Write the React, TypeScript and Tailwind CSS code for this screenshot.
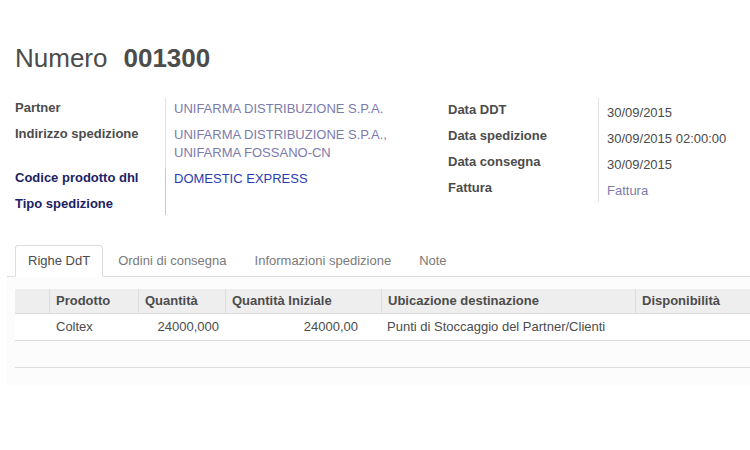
import React from 'react';

interface Field {
  label: string;
  values: string[];
  labelClass?: string;
  valueClass?: string;
  borderClass?: string;
}

const leftFields: Field[] = [
  { label: 'Partner', values: ['UNIFARMA DISTRIBUZIONE S.P.A.'], valueClass: 'text-[#7c7bad]', borderClass: 'border-[#e2e2e2]' },
  {
    label: 'Indirizzo spedizione',
    values: ['UNIFARMA DISTRIBUZIONE S.P.A.,', 'UNIFARMA FOSSANO-CN'],
    valueClass: 'text-[#7c7bad]',
    borderClass: 'border-[#e2e2e2]',
  },
  {
    label: 'Codice prodotto dhl',
    values: ['DOMESTIC EXPRESS'],
    labelClass: 'text-[#1b2263]',
    valueClass: 'text-[#2c3cb4]',
    borderClass: 'border-[#c9c9c9]',
  },
  { label: 'Tipo spedizione', values: [''], labelClass: 'text-[#1b2263]', borderClass: 'border-[#c9c9c9]' },
];

const rightFields: Field[] = [
  { label: 'Data DDT', values: ['30/09/2015'] },
  { label: 'Data spedizione', values: ['30/09/2015 02:00:00'] },
  { label: 'Data consegna', values: ['30/09/2015'] },
  { label: 'Fattura', values: ['Fattura'], valueClass: 'text-[#7c7bad]' },
];

const tabs = ['Righe DdT', 'Ordini di consegna', 'Informazioni spedizione', 'Note'];

export default function App() {
  return (
    <div className="min-h-[450px] bg-white font-['Liberation_Sans',Arial,sans-serif] text-[13px] leading-[20px] text-[#4c4c4c]">
      <div className="pl-[15px] pt-[43px]">
        <h1 className="flex h-[30px] items-baseline text-[26px] leading-[30px]">
          <span>Numero</span>
          <span className="ml-[16px] font-bold">001300</span>
        </h1>
      </div>

      <div className="mt-[25px] flex pl-[15px]">
        <div className="w-[433px]">
          {leftFields.map((f, i) => {
            const last = i === leftFields.length - 1;
            return (
              <div key={f.label} className="flex">
                <div className={`w-[150px] font-bold ${f.labelClass ?? ''} ${last ? 'pb-[1px]' : 'pb-[6px]'}`}>
                  {f.label}
                </div>
                <div
                  className={`flex-1 border-l pl-[8px] pt-[2px] leading-[18px] ${f.borderClass ?? ''} ${f.valueClass ?? ''} ${
                    last ? '' : 'pb-[6px]'
                  }`}
                >
                  {f.values.map((v, j) => (
                    <div key={j} className="h-[18px]">{v}</div>
                  ))}
                </div>
              </div>
            );
          })}
        </div>

        <div className="flex-1">
          {rightFields.map((f) => (
            <div key={f.label} className="flex">
              <div className="w-[150px] pb-[4px] pt-[2px] font-bold">{f.label}</div>
              <div className={`flex-1 border-l border-[#e2e2e2] pb-[1px] pl-[8px] pt-[5px] ${f.valueClass ?? 'text-[#4a4a4a]'}`}>
                {f.values[0]}
              </div>
            </div>
          ))}
        </div>
      </div>

      <div className="mt-[30px]">
        <div className="ml-[7px] flex border-b border-[#dddddd] pl-[8px]">
          {tabs.map((t, i) => (
            <div
              key={t}
              className={`-mb-px mr-[2px] rounded-t-[3px] border px-[12px] py-[5px] ${
                i === 0 ? 'border-[#dddddd] border-b-white bg-white text-[#4c4c4c]' : 'border-transparent text-[#7a7a7a]'
              }`}
            >
              {t}
            </div>
          ))}
        </div>

        <div className="ml-[7px] bg-[#fcfcfc] pb-[17px] pl-[8px] pt-[12px]">
          <div className="w-[735px]">
            <div className="flex h-[25px] items-center border-b border-[#dddddd] bg-[#eeeeee] font-bold">
              <div className="h-full w-[34px]" />
              <div className="flex h-full w-[89px] items-center border-l border-[#dddddd] pl-[6px]">Prodotto</div>
              <div className="flex h-full w-[87px] items-center border-l border-[#dddddd] pl-[6px]">Quantità</div>
              <div className="flex h-full w-[156px] items-center border-l border-[#dddddd] pl-[6px]">Quantità Iniziale</div>
              <div className="flex h-full w-[254px] items-center border-l border-[#dddddd] pl-[6px]">Ubicazione destinazione</div>
              <div className="flex h-full w-[115px] items-center border-l border-[#dddddd] pl-[6px]">Disponibilità</div>
            </div>
            <div className="flex h-[27px] items-center border-b border-[#dddddd] bg-white">
              <div className="w-[34px]" />
              <div className="w-[89px] pl-[7px]">Coltex</div>
              <div className="w-[87px] pr-[6px] text-right">24000,000</div>
              <div className="w-[156px] pr-[23px] text-right">24000,00</div>
              <div className="w-[254px] pl-[6px]">Punti di Stoccaggio del Partner/Clienti</div>
              <div className="w-[115px]" />
            </div>
            <div className="h-[27px] border-b border-[#dddddd]" />
          </div>
        </div>
      </div>
    </div>
  );
}
